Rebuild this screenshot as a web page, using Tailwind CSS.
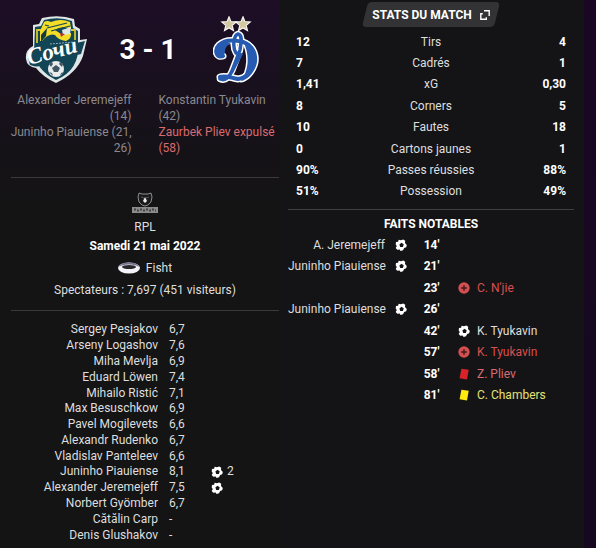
<!DOCTYPE html>
<html lang="fr">
<head>
<meta charset="utf-8">
<title>Sotchi 3 - 1 Dynamo</title>
<script src="https://cdn.jsdelivr.net/npm/@tailwindcss/browser@4"></script>
</head>
<body class="min-h-screen bg-[#141416] font-[Roboto,'Liberation_Sans',sans-serif] text-xs text-[#dededf]">
<svg class="hidden" aria-hidden="true">
  <symbol id="ball" viewBox="0 0 12 12">
    <path fill="#fff" d="M3.6.8 6 1.2 8.2.5 10.2 1.8 10 4 11.8 6 11.2 8.3 9.2 8.9 8 11.2 5.6 11.9 4.6 10.6 2.3 10.8.7 9 1.8 6.9.7 5.4 1 2.9 3.1 2.7z"/>
    <path fill="#141416" d="m6.4 3.7 2.3 1.6-.8 2.6-2.7.1-.8-2.6z"/>
  </symbol>
  <symbol id="injury" viewBox="0 0 12 12">
    <circle cx="6" cy="6" r="5.7" fill="#d2504f"/>
    <path d="M6 3.2v5.6M3.2 6h5.6" stroke="#44171b" stroke-width="1.5"/>
  </symbol>
  <symbol id="card" viewBox="0 0 12 12">
    <path fill="currentColor" d="m3.4.8 7.3 1-1.7 9.6-7.4-1.1z"/>
  </symbol>
</svg>
<div class="grid min-h-screen grid-cols-[280fr_304fr_12px]">
  <section class="bg-linear-to-b from-[#1d0d26] via-[#151217] via-28% to-[#141414] to-40% pr-px pl-[11px]">
    <header class="pt-4">
      <div class="grid grid-cols-[72px_1fr_66px] items-center">
        <svg class="ml-[14px] h-[68px] w-[64px]" viewBox="0 0 64 68" role="img" aria-label="Sotchi">
          <path d="M8 9 14 8 17 2Q34-2 49 3L50 10 55 13V24L62 23 58 40Q52 57 31 67Q18 61 11 52Q2 51 1 43Q0 34 8 30Z" fill="#dfe6e6"/>
          <path d="M10 11 16 10 19 4Q34 0 47 5L48 12 53 15V28Q55 54 31 64Q11 54 9 36Z" fill="#124657"/>
          <path d="M12 27V14H16M46 14H50V24" fill="none" stroke="#d8c52e" stroke-width="1.8"/>
          <path d="M15 15 19 6Q22 4 26 6 36 2 45 6L46 13Q37 9 30 14L36 18 46 17Q47 22 41 25 33 24 30 19 24 17 17 25L15 25Z" fill="#f2de28"/>
          <path d="M16 19 22 12 21 20 16 26Z" fill="#153842"/>
          <path d="m22 12 20-5M26 15l19-5M20 9l4 1" stroke="#174658" stroke-width="1.2"/>
          <path d="m37 14 9-3-1 7-7 1z" fill="#dfe8e8"/><path d="m35 17 5 1-4 3z" fill="#bd2d39"/>
          <path d="M25 28 50 26" stroke="#8fa9b0" stroke-dasharray="2 1"/>
          <path d="M3 42Q4 32 15 30L20 34 60 25 56 38 37 43 22 46Q14 53 5 49Z" fill="#124657"/>
          <text x="4" y="49" transform="rotate(-15 4 49)" class="fill-white font-['Liberation_Serif',serif] text-[23px] font-bold italic">Сочи</text>
          <circle cx="31" cy="53" r="8" fill="#e9ecec"/>
          <path d="m31 49 4 3-2 4h-4l-2-4zM24 48l3-2 1 2-2 3zM35 46l3 2-1 3-3-3zM24 56l3 1 1 3zM35 60l1-3 3-1z" fill="#425565"/>
        </svg>
        <p class="text-center text-[28px] leading-8 font-bold text-white">3 - 1</p>
        <svg class="h-[68px] w-[48px]" viewBox="0 0 48 68" role="img" aria-label="Dynamo">
          <g fill="#d4c8a1" stroke="#fff" stroke-width="2" paint-order="stroke">
            <path d="m16 2 1.7 4.1 4.4.3-3.4 2.9 1.1 4.3-3.8-2.3-3.8 2.3 1.1-4.3-3.4-2.9 4.4-.3z"/>
            <path d="m30 2 1.7 4.1 4.4.3-3.4 2.9 1.1 4.3-3.8-2.3-3.8 2.3 1.1-4.3-3.4-2.9 4.4-.3z"/>
          </g>
          <g stroke="#fff" stroke-linecap="round" stroke-linejoin="round">
            <path fill="none" stroke-width="7" d="M10 40C3 42 1 34 6 29 12 23 22 24 30 26 39 29 42 37 41 44 40 55 33 62 25 63 18 62 13 59 7 61"/>
            <path fill="none" stroke-width="6.5" d="M23 37C19 31 21 19 25 18 30 19 28 27 27 34L19 55Q14 66 7 63"/>
            <path fill="#fff" stroke-width="3" d="M30 25C44 28 46 42 43 50 40 58 34 64 28 65 36 54 37 38 30 25Z"/>
          </g>
          <g stroke="#265bb1" stroke-linecap="round" stroke-linejoin="round">
            <path fill="none" stroke-width="4" d="M10 40C3 42 1 34 6 29 12 23 22 24 30 26 39 29 42 37 41 44 40 55 33 62 25 63 18 62 13 59 7 61"/>
            <path fill="none" stroke-width="3.5" d="M23 37C19 31 21 19 25 18 30 19 28 27 27 34L19 55Q14 66 7 63"/>
            <path fill="#265bb1" stroke="none" d="M30 25C44 28 46 42 43 50 40 58 34 64 28 65 36 54 37 38 30 25ZM5 31Q11 25 18 27 11 31 12 37 9 43 5 39 3 35 5 31ZM25 35 30 38 20 57 16 59Z"/>
          </g>
        </svg>
      </div>
      <div class="mt-2 grid grid-cols-2 gap-x-[27px] leading-4 text-[#8b898e]">
        <div class="-ml-2 text-right">
          <p>Alexander Jeremejeff<br>(14)</p>
          <p>Juninho Piauiense (21,<br>26)</p>
        </div>
        <div>
          <p>Konstantin Tyukavin<br>(42)</p>
          <p class="text-[#d96b70]">Zaurbek Pliev expulsé<br>(58)</p>
        </div>
      </div>
    </header>
    <div class="mt-[21px] flex flex-col items-center border-y border-[#3a3a3a] pt-[14px] pb-3 leading-4">
      <svg class="h-[21px] w-[26px]" viewBox="0 0 26 21" role="img" aria-label="RPL">
        <path d="m7 1 3 1h6l3-1 1 4-1 5-3 3-3 1-3-1-3-3-1-5z" fill="#1b1b1b" stroke="#8d8d8d"/>
        <path d="m9 5 3 1M17 5l-3 1" stroke="#555"/>
        <path d="m13 5 2 4-2 2-2-2z" fill="#eee"/>
        <path d="M0 15h26v6H0z" fill="#8b8b8b"/>
        <path d="M2 17.500h2M5 18.500h2M8 17.500h2M11 18.500h2M14 17.500h2M17 18.500h2M20 17.500h2M23 18.500h1" stroke="#444" stroke-width="2"/>
      </svg>
      <p class="mt-[6px]">RPL</p>
      <p class="mt-[3px] font-bold text-white">Samedi 21 mai 2022</p>
      <p class="mt-[6px] flex items-center gap-[6px]">
        <svg class="h-3 w-[22px]" viewBox="0 0 22 12" aria-hidden="true">
          <ellipse cx="11" cy="6" rx="11" ry="5.5" fill="#f4f3f9"/>
          <path d="M0 5Q4 0 11 .5 18 0 22 5L18 3.5Q11 1.5 4 3.5Z" fill="#77728e"/>
          <ellipse cx="11" cy="5" rx="7" ry="2" fill="#29282c"/>
        </svg>Fisht</p>
      <p class="mt-[6px]">Spectateurs : 7,697 (451 visiteurs)</p>
    </div>
    <table class="mt-[11px] h-[221px] w-full table-fixed leading-[15px]" aria-label="Notes des joueurs">
      <colgroup><col class="w-[147px]"><col class="w-[53px]"><col></colgroup>
      <tbody>
        <tr><td class="text-right">Sergey Pesjakov</td><td class="pl-[11px]">6,7</td><td></td></tr>
        <tr><td class="text-right">Arseny Logashov</td><td class="pl-[11px]">7,6</td><td></td></tr>
        <tr><td class="text-right">Miha Mevlja</td><td class="pl-[11px]">6,9</td><td></td></tr>
        <tr><td class="text-right">Eduard Löwen</td><td class="pl-[11px]">7,4</td><td></td></tr>
        <tr><td class="text-right">Mihailo Ristić</td><td class="pl-[11px]">7,1</td><td></td></tr>
        <tr><td class="text-right">Max Besuschkow</td><td class="pl-[11px]">6,9</td><td></td></tr>
        <tr><td class="text-right">Pavel Mogilevets</td><td class="pl-[11px]">6,6</td><td></td></tr>
        <tr><td class="text-right">Alexandr Rudenko</td><td class="pl-[11px]">6,7</td><td></td></tr>
        <tr><td class="text-right">Vladislav Panteleev</td><td class="pl-[11px]">6,6</td><td></td></tr>
        <tr><td class="text-right">Juninho Piauiense</td><td class="pl-[11px]">8,1</td><td><div class="flex items-center gap-1"><svg class="size-3"><use href="#ball"/></svg>2</div></td></tr>
        <tr><td class="text-right">Alexander Jeremejeff</td><td class="pl-[11px]">7,5</td><td><svg class="size-3"><use href="#ball"/></svg></td></tr>
        <tr><td class="text-right">Norbert Gyömber</td><td class="pl-[11px]">6,7</td><td></td></tr>
        <tr><td class="text-right">Cătălin Carp</td><td class="pl-[11px]">-</td><td></td></tr>
        <tr><td class="text-right">Denis Glushakov</td><td class="pl-[11px]">-</td><td></td></tr>
      </tbody>
    </table>
  </section>

  <section class="pt-[2px] pr-[10px] pl-2">
    <div class="flex justify-center">
      <button type="button" class="relative flex h-[25px] items-center gap-2 px-[10px] font-bold text-white">
        <span class="absolute inset-y-0 right-[3px] left-[3px] -skew-x-[14deg] rounded-[4px] bg-[#333335]"></span>
        <span class="relative">STATS DU MATCH</span>
        <svg class="relative h-[10px] w-[10px]" viewBox="0 0 10 10" fill="none" stroke="#fff" stroke-width="1.4" aria-hidden="true"><path d="M4 .8h5.2V6M2.8 3.7H.8v5.5h5.5V7.2"/></svg>
      </button>
    </div>
    <table class="mt-1 h-[171px] w-full table-fixed leading-4" aria-label="Stats du match">
      <colgroup><col class="w-[60px]"><col><col class="w-[60px]"></colgroup>
      <tbody class="[&_td:first-child]:pl-2 [&_td:last-child]:pr-2 [&_td]:font-bold [&_td]:text-white">
        <tr><td>12</td><th scope="row" class="font-normal">Tirs</th><td class="text-right">4</td></tr>
        <tr><td>7</td><th scope="row" class="font-normal">Cadrés</th><td class="text-right">1</td></tr>
        <tr><td>1,41</td><th scope="row" class="font-normal">xG</th><td class="text-right">0,30</td></tr>
        <tr><td>8</td><th scope="row" class="font-normal">Corners</th><td class="text-right">5</td></tr>
        <tr><td>10</td><th scope="row" class="font-normal">Fautes</th><td class="text-right">18</td></tr>
        <tr><td>0</td><th scope="row" class="font-normal">Cartons jaunes</th><td class="text-right">1</td></tr>
        <tr><td>90%</td><th scope="row" class="font-normal">Passes réussies</th><td class="text-right">88%</td></tr>
        <tr><td>51%</td><th scope="row" class="font-normal">Possession</th><td class="text-right">49%</td></tr>
      </tbody>
    </table>
    <div class="mt-[7px] border-t border-[#3f3f42] pt-[6px]">
      <h2 class="text-center leading-4 font-bold text-white">FAITS NOTABLES</h2>
      <table class="mt-[2px] h-[172px] w-full table-fixed leading-4" aria-label="Faits notables">
        <colgroup><col class="w-[97px]"><col class="w-[31px]"><col class="w-[31px]"><col class="w-[30px]"><col></colgroup>
        <tbody class="[&_th]:text-center [&_th]:text-white">
          <tr><td class="text-right whitespace-nowrap">A. Jeremejeff</td><td><svg class="mx-auto size-3"><use href="#ball"/></svg></td><th scope="row">14'</th><td></td><td></td></tr>
          <tr><td class="text-right whitespace-nowrap">Juninho Piauiense</td><td><svg class="mx-auto size-3"><use href="#ball"/></svg></td><th scope="row">21'</th><td></td><td></td></tr>
          <tr><td></td><td></td><th scope="row">23'</th><td><svg class="ml-auto mr-[7px] size-3"><use href="#injury"/></svg></td><td class="text-[#d94f4f]">C. N'jie</td></tr>
          <tr><td class="text-right whitespace-nowrap">Juninho Piauiense</td><td><svg class="mx-auto size-3"><use href="#ball"/></svg></td><th scope="row">26'</th><td></td><td></td></tr>
          <tr><td></td><td></td><th scope="row">42'</th><td><svg class="ml-auto mr-[7px] size-3"><use href="#ball"/></svg></td><td>K. Tyukavin</td></tr>
          <tr><td></td><td></td><th scope="row">57'</th><td><svg class="ml-auto mr-[7px] size-3"><use href="#injury"/></svg></td><td class="text-[#d94f4f]">K. Tyukavin</td></tr>
          <tr><td></td><td></td><th scope="row">58'</th><td><svg class="ml-auto mr-[7px] size-3 text-[#d8232a]"><use href="#card"/></svg></td><td class="text-[#d96b70]">Z. Pliev</td></tr>
          <tr><td></td><td></td><th scope="row">81'</th><td><svg class="ml-auto mr-[7px] size-3 text-[#fde910]"><use href="#card"/></svg></td><td class="text-[#e6e176]">C. Chambers</td></tr>
        </tbody>
      </table>
    </div>
  </section>
  <div class="bg-linear-to-b from-[#190724] to-[#160820]"></div>
</div>
</body>
</html>
